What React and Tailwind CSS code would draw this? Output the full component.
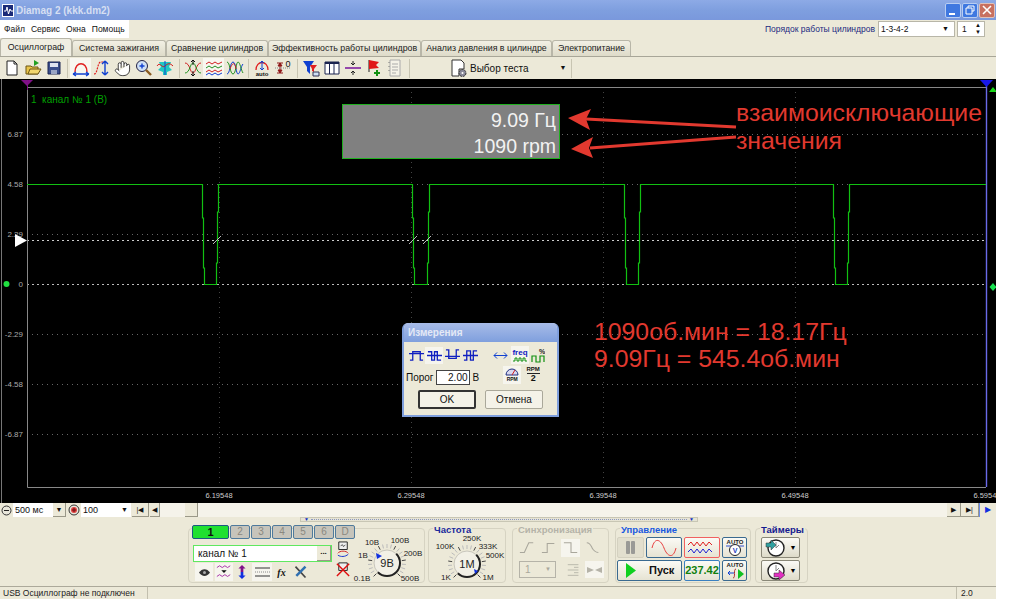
import { Hand } from 'lucide-react';

const pulses = [
    [202, 218],
    [412, 429],
    [624, 640],
    [833, 849],
];

// the green trace, with the small steps on each edge
const tracePath = () => {
    let d = 'M27 184.5';
    pulses.forEach(([a, b]) => {
        const l = a + 0.5;
        const r = b + 0.5;
        d += ` L${l} 184.5 L${l} 218 L${l + 1} 218 L${l + 1} 268 L${l + 2} 268 L${l + 2} 284.5 L${r - 2} 284.5 L${r - 2} 263 L${r - 1} 263 L${r - 1} 212 L${r} 212 L${r} 184.5`;
    });
    return d + ' L986 184.5';
};

const yLabels = [
    ['6.87', 134],
    ['4.58', 184],
    ['2.29', 234],
    ['0', 284],
    ['-2.29', 334],
    ['-4.58', 384],
    ['-6.87', 434],
];

const xLabels = [
    ['6.19548', 219],
    ['6.29548', 411],
    ['6.39548', 603],
    ['6.49548', 795],
    ['6.59548', 987],
];

const Ico = ({ children, size = 18, box = 18 }) => (
    <svg width={size} height={size} viewBox={`0 0 ${box} ${box}`} fill="none">
        {children}
    </svg>
);

const toolbar = [
    [
        <Ico key="n"><path d="M4 2h7l3 3v11H4z" fill="#fff" stroke="#222" /><path d="M11 2v3h3" stroke="#222" /></Ico>,
        <Ico key="o"><path d="M2 7h5l1 1h6v7H2z" fill="#e8c44a" stroke="#6b5512" /><path d="M4 15l2-5h11l-3 5z" fill="#f2d76c" stroke="#6b5512" /><path d="M10 1l5 3-5 3z" fill="#22a022" /></Ico>,
        <Ico key="s"><path d="M3 3h12v12H3z" fill="#3b4f8c" stroke="#1b2450" /><path d="M5 4h8v4H5z" fill="#dfe4f0" /><path d="M6 11h6v4H6z" fill="#9aa5c4" /></Ico>,
    ],
    [
        <Ico key="a1"><path d="M3 13C3 2 15 2 15 13" stroke="#e02020" strokeWidth="1.4" /><path d="M1 15h16M1 15l3-2M1 15l3 2M17 15l-3-2M17 15l-3 2" stroke="#1040d0" strokeWidth="1.3" /></Ico>,
        <Ico key="a2"><path d="M1 15C5 15 4 3 8 3h5" stroke="#e02020" strokeWidth="1.2" strokeDasharray="2 1" /><path d="M12 2v14M12 2l-3 3M12 2l3 3M12 16l-3-3M12 16l3-3" stroke="#1040d0" strokeWidth="1.4" /></Ico>,
        <Hand key="a3" size={17} strokeWidth={1.2} color="#222" fill="#fff" />,
        <Ico key="a4"><circle cx="7" cy="7" r="5.5" fill="#cfe0f5" stroke="#224" /><path d="M4.5 7h5M7 4.5v5" stroke="#1040d0" strokeWidth="1.4" /><path d="M11 11l5 5" stroke="#8a5a20" strokeWidth="2.4" /></Ico>,
        <Ico key="a5"><path d="M3 3h12l-2 5 3 3-5 2v3H7v-3l-5-2 3-3z" fill="#20c8c0" /><path d="M1 7c3-5 5 3 8 0s5-3 8 0" stroke="#d02020" /><path d="M9 2v14" stroke="#1040d0" /></Ico>,
    ],
    [
        <Ico key="b1"><path d="M1 4c5 0 5 10 8 10s3-10 8-10" stroke="#d02020" /><path d="M1 14c5 0 5-10 8-10s3 10 8 10" stroke="#209020" /><path d="M9 1v5M9 12v5M9 1L7 3M9 1l2 2M9 17l-2-2M9 17l2-2" stroke="#111" /></Ico>,
        <Ico key="b2"><path d="M1 5l3-2 3 2 3-2 3 2 4-2" stroke="#d02020" /><path d="M1 9l3-2 3 2 3-2 3 2 4-2" stroke="#209020" /><path d="M1 13l3-2 3 2 3-2 3 2 4-2" stroke="#d02020" /><path d="M1 16l3-2 3 2 3-2 3 2 4-2" stroke="#1040d0" /></Ico>,
        <Ico key="b3"><path d="M1 15C4 15 4 3 7 3s3 12 5 12 3-8 5-10" stroke="#1040d0" /><path d="M1 3c3 0 3 12 6 12s3-12 5-12 3 8 5 11" stroke="#209020" /><path d="M4 10c3-8 5-6 6 0" stroke="#d02020" /></Ico>,
    ],
    [
        <Ico key="c1"><path d="M3 11C3 1 15 1 15 11" stroke="#e02020" strokeWidth="1.3" /><path d="M9 2v9M9 2L7 4M9 2l2 2M9 11L7 9M9 11l2-2" stroke="#1040d0" /><text x="9" y="17" textAnchor="middle" fontSize="6" fontWeight="700" fill="#111">auto</text></Ico>,
        <Ico key="c2"><path d="M6 4v10M3 4h6M3 14h6M6 4L4 7h4zM6 14l-2-3h4z" stroke="#901818" fill="#901818" /><path d="M1 9h16" stroke="#888" strokeDasharray="1 1" /><text x="14" y="8" textAnchor="middle" fontSize="9" fill="#111">0</text></Ico>,
    ],
    [
        <Ico key="d1"><path d="M1 2h11L8 8v7L5 12V8z" fill="#1040d0" /><path d="M8 6h7l-3 4v3l-2-1v-2z" fill="#e02020" /><path d="M11 13h6v4h-6z" fill="#cfe0f5" stroke="#335" /></Ico>,
        <Ico key="d2"><path d="M2 3h14v12H2z" fill="#fff" stroke="#1b2450" /><path d="M2 3h14v2H2z" fill="#1b2450" /><path d="M6.5 3v12M11 3v12" stroke="#1b2450" /></Ico>,
        <Ico key="d3"><path d="M1 9h16" stroke="#8020a0" strokeWidth="1.6" /><path d="M9 2v4M7 4l2 2 2-2M9 16v-4M7 14l2-2 2 2" stroke="#222" /></Ico>,
        <Ico key="d4"><path d="M4 1v12" stroke="#222" /><path d="M4 1l10 2-3 3 3 3-10 1z" fill="#e01818" /><path d="M12 11v6M9 14h6" stroke="#109010" strokeWidth="2" /></Ico>,
        <Ico key="d5"><path d="M4 1h10v16H4z" fill="#f4f2e8" stroke="#aaa" /><path d="M6 5h6M6 8h6M6 11h6M6 14h4" stroke="#aaa" /><path d="M3 3v1M3 7v1M3 11v1" stroke="#777" /></Ico>,
    ],
];

const ToolbarSep = ({ className }) => <div className={`w-px h-[19px] bg-[#c8c5b2] ${className}`} />;

const tabs = [
    ['Осциллограф', 'w-[72px]', true],
    ['Система зажигания', 'w-[94px]'],
    ['Сравнение цилиндров', 'w-[102px]'],
    ['Эффективность работы цилиндров', 'w-[153px]'],
    ['Анализ давления в цилиндре', 'w-[131px]'],
    ['Электропитание', 'w-[79px]'],
];

const MiniBtn = ({ children, className = '' }) => (
    <div className={`flex items-center justify-center h-[14px] bg-[#ece9d8] border-r border-b border-[#9a9888] text-[#111] ${className}`}>
        {children}
    </div>
);

const voltLabels = [
    ['10В', 24, 15],
    ['100В', 52, 13],
    ['200В', 65, 26],
    ['500В', 62, 51],
    ['0.1В', 14, 51],
    ['1В', 15, 28],
];

const freqLabels = [
    ['250K', 43, 15],
    ['100K', 16, 23],
    ['333K', 59, 23],
    ['500K', 66, 32],
    ['1K', 17, 54],
    ['1М', 59, 54],
];

const Dial = ({ labels, value, cx, cy, marker, w, h }) => {
    const ticks = [];
    for (let i = 0; i <= 20; i++) {
        const a = ((135 + i * 13.5) * Math.PI) / 180;
        ticks.push(
            <line
                key={i}
                x1={cx + Math.cos(a) * 15}
                y1={cy + Math.sin(a) * 15}
                x2={cx + Math.cos(a) * 19}
                y2={cy + Math.sin(a) * 19}
                stroke={i % 4 === 0 ? '#444' : '#bbb'}
            />
        );
    }
    return (
        <svg width={w} height={h} viewBox={`0 0 ${w} ${h}`} fill="none" className="shrink-0">
            {ticks}
            <circle cx={cx} cy={cy} r="13" fill="#f2f0e6" stroke="#c8c6bc" />
            <path d={`M${cx + 9.2} ${cy - 9.2}A13 13 0 0 1 ${cx - 9.2} ${cy + 9.2}`} stroke="#222" strokeWidth="2" />
            <path d={marker} fill="#1030e0" />
            <text x={cx} y={cy + 4} textAnchor="middle" fontSize="11" fill="#222">{value}</text>
            {labels.map(([t, x, y]) => (
                <text key={t} x={x} y={y} textAnchor="middle" fontSize="8" fill="#222">{t}</text>
            ))}
        </svg>
    );
};

const Group = ({ title, titleColor, className, children }) => (
    <div className={`relative h-[55px] border border-[#d6d3c2] rounded-[4px] ${className}`}>
        {title && (
            <div className={`absolute -top-[5px] left-[4px] bg-[#ece9d8] px-px text-[9.5px] leading-[11px] font-bold whitespace-nowrap ${titleColor}`}>
                {title}
            </div>
        )}
        {children}
    </div>
);

const xpBtn = 'flex items-center justify-center rounded-[2px] border border-[#3a6a90] bg-gradient-to-b from-[#fbfaf5] to-[#e6e3d3]';

const Measure = () => (
    <div className="absolute left-[402px] top-[244px] w-[157px] h-[94px] flex flex-col rounded-t-[6px] overflow-hidden border-2 border-t-0 border-[#7f9fdd] bg-[#ece9d8]">
        <div className="h-[19px] shrink-0 bg-gradient-to-b from-[#a8bce8] to-[#7f9fdd] pl-[4px] text-[10px] leading-[19px] font-bold text-[#e4e9f6]">
            Измерения
        </div>
        <div className="flex items-center h-[20px] mt-[3px]">
            {['M1 13h3V4h8v9h3M0 6h16', 'M1 4h4v9h3V4h3v9h4M0 8h16', 'M1 2h3v9h8V2h3M0 9h16', 'M1 13h3V3h4v10h3V3h4M0 8h16'].map((d, i) => (
                <div key={d} className={`w-[18px] h-[17px] flex items-center justify-center ${i === 0 ? 'ml-[3px]' : ''} ${i === 1 ? 'bg-[#f6f5ee]' : ''}`}>
                    <svg width="15" height="15" viewBox="0 0 16 16" fill="none"><path d={d} stroke="#1020c0" strokeWidth="1.4" /></svg>
                </div>
            ))}
            <svg width="15" height="9" viewBox="0 0 15 9" fill="none" className="ml-[14px]"><path d="M1 4.5h13M1 4.5l3-3M1 4.5l3 3M14 4.5l-3-3M14 4.5l-3 3" stroke="#1040d0" /></svg>
            <div className="ml-[3px] w-[18px] h-[18px] bg-[#f6f5ee] flex flex-col items-center justify-center text-[8px] leading-[8px] font-bold text-[#1020c0]">
                freq
                <svg width="15" height="5" viewBox="0 0 15 5" fill="none"><path d="M0 4h2V1h2v3h2V1h2v3h2V1h2v3h2" stroke="#109010" /></svg>
            </div>
            <svg width="14" height="17" viewBox="0 0 14 17" fill="none" className="ml-[2px]">
                <path d="M1 15V9h4v6h4V9h4v6" stroke="#109010" strokeWidth="1.2" />
                <text x="8" y="7" fontSize="7" fontWeight="700" fill="#222">%</text>
            </svg>
        </div>
        <div className="flex items-center h-[19px] text-[10px] text-[#111]">
            <span className="ml-[2px] mt-[5px]">Порог</span>
            <div className="ml-[2px] mt-[5px] w-[34px] h-[15px] border border-[#444] bg-white text-right pr-px leading-[13px]">2.00</div>
            <span className="ml-[3px] mt-[5px]">В</span>
            <div className="ml-[24px] w-[18px] h-[18px] bg-[#f6f5ee] flex flex-col items-center justify-center">
                <svg width="14" height="9" viewBox="0 0 14 9" fill="none"><path d="M1 8a6 6 0 0 1 12 0z" fill="#d8d8f0" stroke="#203080" /><path d="M7 8l3-5" stroke="#d02020" /></svg>
                <span className="text-[5px] leading-[6px] font-bold">RPM</span>
            </div>
            <div className="ml-[3px] w-[18px] flex flex-col items-center text-[6px] leading-[7px] font-bold">
                <span className="border-b border-[#222]">RPM</span>
                <span className="text-[9px] leading-[9px]">2</span>
            </div>
        </div>
        <div className="flex mt-[6px] text-[10px] text-[#111]">
            <div className="ml-[14px] w-[58px] h-[19px] flex items-center justify-center border-2 border-[#333] rounded-[2px] bg-[#f4f2e8]">OK</div>
            <div className="ml-[9px] w-[58px] h-[19px] flex items-center justify-center border border-[#aaa89a] rounded-[2px] bg-[#f4f2e8]">Отмена</div>
        </div>
    </div>
);

const Scope = () => (
    <div className="relative h-[424px] bg-black overflow-hidden">
        <svg width="996" height="424" viewBox="0 79 996 424" className="absolute left-0 top-0" fill="none">
            <line x1="1.5" y1="79" x2="1.5" y2="503" stroke="#777" />
            {xLabels.slice(0, 4).map(([t, x]) => (
                <line key={t} x1={x + 0.5} y1="87" x2={x + 0.5} y2="487" stroke="#444" strokeDasharray="1 4" />
            ))}
            {yLabels.map(([t, y]) => (
                <g key={t}>
                    <line x1="27" y1={y + 0.5} x2="986" y2={y + 0.5} stroke={y === 284 ? '#bbb' : '#666'} strokeDasharray={y === 284 ? '2 3' : '1 4'} />
                    <text x="23" y={y + 3} textAnchor="end" fontSize="8" fill="#aaa">{t}</text>
                </g>
            ))}
            <line x1="27" y1="240.5" x2="986" y2="240.5" stroke="#ccc" strokeDasharray="2 3" />
            <path d="M27.5 87.500H986M27.500 87.500V487.500H986" stroke="#888" />
            <line x1="986.5" y1="86" x2="986.5" y2="487" stroke="#6a6ae8" strokeWidth="1.4" />
            <path d={tracePath()} stroke="#12c012" strokeWidth="1.2" />
            {[217, 413, 427].map((x) => (
                <line key={x} x1={x - 4} y1="244" x2={x + 4} y2="236" stroke="#bbb" />
            ))}
            <path d="M15 234L27 240.5L15 247z" fill="#fff" />
            <circle cx="6.5" cy="284" r="3" fill="#20e040" />
            <path d="M21 80H33L27 86z" fill="#801088" />
            <line x1="27.5" y1="84" x2="27.5" y2="90" stroke="#801088" />
            <path d="M980 80H993L986.500 87z" fill="#1818e8" />
            <path d="M989 92L993 87L997 92z" fill="#18d818" />
            <path d="M993 283l3.500 4-3.500 4-3.500-4z" fill="#18e050" />
            {xLabels.map(([t, x]) => (
                <text key={t} x={x} y="498" textAnchor="middle" fontSize="7.5" fill="#ccc">{t}</text>
            ))}
            <path d="M736 127L586 119" stroke="#e2392f" strokeWidth="3" />
            <path d="M568 118L591 109L586 119L590 130z" fill="#e2392f" />
            <path d="M736 137L590 148" stroke="#e2392f" strokeWidth="3" />
            <path d="M571 149L593 137L589 148L593 158z" fill="#e2392f" />
        </svg>
        <div className="absolute left-[31px] top-[15px] text-[10px] leading-[12px] text-[#00a000] whitespace-pre">1  канал № 1 (В)</div>
        <div className="absolute left-[342px] top-[25px] w-[218px] h-[55px] bg-[#808080] border border-[#20b020] flex flex-col items-end pr-[3px] pt-[2px] text-[19.5px] leading-[26px] text-[#f2f2f2]">
            <span>9.09 Гц</span>
            <span>1090 rpm</span>
        </div>
        <div className="absolute left-[736px] top-[20px] text-[24.8px] leading-[28px] text-[#e2392f] whitespace-nowrap">
            взаимоисключающие
            <br />
            значения
        </div>
        <div className="absolute left-[594px] top-[239px] text-[24.8px] leading-[27px] text-[#e2392f] whitespace-nowrap">
            1090об.мин = 18.17Гц
            <br />
            9.09Гц = 545.4об.мин
        </div>
        <Measure />
    </div>
);

const ScrollRow = () => (
    <div className="flex h-[14px] text-[9px] leading-[14px] text-[#111]">
        <div className="w-[13px] flex items-center justify-center">
            <svg width="11" height="11" viewBox="0 0 11 11" fill="none"><circle cx="5.5" cy="5.5" r="4.5" fill="#e8e6da" stroke="#333" /><path d="M3 5.5h5" stroke="#222" /></svg>
        </div>
        <div className="w-[40px] bg-white pl-[2px]">500 мс</div>
        <MiniBtn className="w-[13px] text-[7px]">▼</MiniBtn>
        <div className="w-[14px] ml-px flex items-center justify-center">
            <svg width="12" height="12" viewBox="0 0 12 12" fill="none"><circle cx="6" cy="6" r="5" fill="#e8e6da" stroke="#333" /><circle cx="6" cy="6" r="3" fill="#e04040" /><path d="M4 6h4M6 4v4" stroke="#611" /></svg>
        </div>
        <div className="w-[50px] bg-white pl-[2px] flex justify-between pr-[3px]">
            <span>100</span>
            <span className="text-[7px]">▼</span>
        </div>
        <MiniBtn className="w-[17px] ml-px text-[7px]">|◀</MiniBtn>
        <MiniBtn className="w-[10px] ml-px text-[7px]">◀</MiniBtn>
        <div className="flex-1 bg-[#f5f3ea]">
            <div className="ml-[25px] w-[13px] h-[14px] bg-[#ece9d8] border-r border-b border-[#9a9888]" />
        </div>
        <MiniBtn className="w-[14px] text-[7px]">▶</MiniBtn>
        <MiniBtn className="w-[18px] text-[7px]">▶|</MiniBtn>
        <div className="w-[17px] border-l border-[#6a8ae8] text-center text-[8px] text-[#1030e0]">▶</div>
    </div>
);

const ChannelGroup = () => (
    <Group className="w-[237px]">
        <div className="absolute left-[3px] -top-[4px] flex gap-px">
            <div className="w-[37px] h-[14px] rounded-[2px] border border-[#1b5a80] bg-[#20e030] text-center text-[11px] leading-[12px] font-bold text-[#111]">1</div>
            {['2', '3', '4', '5', '6', 'D'].map((c) => (
                <div key={c} className="w-[20px] h-[14px] rounded-[2px] border border-[#4f7a9c] bg-[#c6c4bb] text-center text-[10px] leading-[12px] text-[#8a8880]">{c}</div>
            ))}
        </div>
        <div className="flex pl-[4px] pt-[16px]">
            <div className="w-[139px] shrink-0">
                <div className="h-[17px] flex border border-[#60e860] bg-white text-[10px] leading-[15px] text-[#111]">
                    <span className="flex-1 pl-[4px]">канал № 1</span>
                    <div className="w-[14px] bg-[#ece9d8] border-r border-b border-[#9a9888] text-center text-[8px] leading-[11px] font-bold">...</div>
                </div>
                <div className="flex items-center h-[18px] mt-px">
                    <div className="w-[18px] h-[18px] ml-[2px] bg-[#f6f5ee] flex items-center justify-center">
                        <svg width="13" height="9" viewBox="0 0 13 9"><path d="M1 4.5C4 0 9 0 12 4.5 9 9 4 9 1 4.5z" fill="#333" /><circle cx="6.5" cy="4.5" r="1.5" fill="#aaa" /></svg>
                    </div>
                    <div className="w-[18px] h-[18px] ml-[2px] bg-[#f6f5ee] flex items-center justify-center">
                        <Ico size={16}><path d="M1 4l3-2 3 2 3-2 3 2 3-2" stroke="#a020a0" /><path d="M1 14l3-2 3 2 3-2 3 2 3-2" stroke="#a020a0" /><path d="M6 7h6l-3 3z" fill="#111" /></Ico>
                    </div>
                    <div className="w-[16px] ml-[1px] flex justify-center">
                        <Ico size={16}><path d="M9 1l4 4h-2.500v4h-3V5H5z" fill="#801088" /><path d="M7.500 9h3v4H13l-4 4-4-4h2.500z" fill="#1030e0" /></Ico>
                    </div>
                    <div className="w-[20px] h-[18px] ml-[2px] bg-[#f6f5ee] flex items-center justify-center">
                        <svg width="15" height="10" viewBox="0 0 15 10" fill="none"><path d="M0 1h15M0 9h15" stroke="#333" /><path d="M0 5h15" stroke="#888" strokeDasharray="1 1" /></svg>
                    </div>
                    <span className="w-[15px] ml-[2px] text-center font-['Liberation_Serif',serif] italic font-bold text-[10px] text-[#111]">fx</span>
                    <div className="w-[16px] ml-[3px] flex justify-center">
                        <Ico size={15}><path d="M3 2l12 13" stroke="#444" strokeWidth="2" /><path d="M15 2L4 13" stroke="#3070b0" strokeWidth="3" /></Ico>
                    </div>
                </div>
            </div>
            <div className="w-[17px] ml-[3px] -mt-[4px] flex flex-col items-center gap-[3px] shrink-0">
                <Ico size={17}><path d="M4 1h9v8H4z" fill="#eee" stroke="#222" /><path d="M6 5l2-1 1 2 2-2" stroke="#555" /><path d="M3 13c2-3 9-3 11 0" stroke="#d02020" /><path d="M3 15c3 2 8 2 11-1" stroke="#1030d0" /></Ico>
                <Ico size={17}><path d="M4 2h9v8H4z" fill="#eee" stroke="#222" /><path d="M2 3l13 13M15 3L2 16" stroke="#e01010" strokeWidth="1.5" /></Ico>
            </div>
            <div className="-mt-[15px] -ml-[4px]">
                <Dial labels={voltLabels} value="9В" cx={39} cy={33} w={76} h={54} marker="M28 23l6 3-5 3z" />
            </div>
        </div>
    </Group>
);

const SyncGroup = () => (
    <Group title="Синхронизация" titleColor="text-[#b5b3a8]" className="w-[97px] ml-[6px]">
        <div className="flex items-center h-[20px] mt-[9px] pl-[4px] gap-[3px]">
            {['M1 14h5l5-11h5', 'M1 14h6V4h8', 'M1 3h8v11h7', 'M2 3c4 0 5 4 6 6s4 5 7 5'].map((d, i) => (
                <div key={d} className={`w-[19px] h-[18px] flex items-center justify-center ${i === 2 ? 'bg-[#f6f5ee]' : ''}`}>
                    <Ico size={16}><path d={d} stroke="#a9a79c" strokeWidth="1.2" /></Ico>
                </div>
            ))}
        </div>
        <div className="flex items-center mt-[3px] pl-[6px]">
            <div className="w-[37px] h-[17px] border border-[#b5b3a8] text-[10px] leading-[15px] text-[#a9a79c] pl-[5px] flex justify-between pr-[4px]">
                <span>1</span>
                <span className="text-[6px]">▼</span>
            </div>
            <div className="w-[19px] ml-[8px] flex justify-center">
                <Ico size={16}><path d="M2 3h12M2 9h12M2 15h12M9 6h5M9 12h5" stroke="#b5b3a8" /></Ico>
            </div>
            <div className="w-[19px] h-[17px] ml-[2px] bg-[#f6f5ee] flex items-center justify-center">
                <svg width="15" height="8" viewBox="0 0 15 8"><path d="M0 1l7 3-7 3zM15 1L8 4l7 3z" fill="#b5b3a8" /></svg>
            </div>
        </div>
    </Group>
);

const ControlGroup = () => (
    <Group title="Управление" titleColor="text-[#1a5ae0]" className="w-[136px] ml-[6px]">
        <div className="flex gap-[2px] pl-px pt-[8px]">
            <div className="w-[27px] h-[21px] rounded-[2px] bg-[#e2dfce] border border-[#d4d1c0] flex items-center justify-center gap-px">
                <div className="w-[4px] h-[13px] bg-[#9a9a96] rounded-[1px]" />
                <div className="w-[4px] h-[13px] bg-[#9a9a96] rounded-[1px]" />
            </div>
            <div className={`w-[36px] h-[21px] ${xpBtn}`}>
                <svg width="26" height="17" viewBox="0 0 26 17" fill="none"><path d="M1 9C4-3 10 1 13 9s9 12 12 0" stroke="#e84040" /></svg>
            </div>
            <div className={`w-[36px] h-[21px] ${xpBtn} border-[#f06060]`}>
                <svg width="30" height="17" viewBox="0 0 30 17" fill="none">
                    <path d="M1 6l3-3 3 4 3-4 3 4 3-4 3 4 3-4 3 3" stroke="#e02020" />
                    <path d="M1 13l3-3 3 4 3-4 3 4 3-4 3 4 3-4 3 3" stroke="#2020d0" />
                </svg>
            </div>
            <div className={`w-[25px] h-[21px] ${xpBtn}`}>
                <svg width="20" height="19" viewBox="0 0 20 19" fill="none">
                    <text x="10" y="6" textAnchor="middle" fontSize="6" fontWeight="700" fill="#222">AUTO</text>
                    <path d="M1 8h18" stroke="#3050d0" />
                    <circle cx="10" cy="12" r="5.5" fill="#fff" stroke="#222" />
                    <text x="10" y="15" textAnchor="middle" fontSize="7" fontWeight="700" fill="#2040c0">V</text>
                </svg>
            </div>
        </div>
        <div className="flex gap-[2px] pl-px pt-[2px]">
            <div className={`w-[65px] h-[21px] ${xpBtn} justify-start pl-[8px] text-[11px] font-bold text-[#111]`}>
                <svg width="10" height="15" viewBox="0 0 10 15" className="shrink-0"><path d="M0 0l10 7.5L0 15z" fill="#10d020" /></svg>
                <span className="ml-[13px]">Пуск</span>
            </div>
            <div className={`w-[36px] h-[21px] ${xpBtn} border-[#3a80c0] text-[11px] font-bold text-[#108010]`}>237.42</div>
            <div className={`w-[25px] h-[21px] ${xpBtn}`}>
                <svg width="20" height="19" viewBox="0 0 20 19" fill="none">
                    <text x="10" y="6" textAnchor="middle" fontSize="6" fontWeight="700" fill="#222">AUTO</text>
                    <path d="M3 12h6M3 12l2-2M3 12l2 2" stroke="#1040d0" />
                    <path d="M8 17c3 0 0-9 3-9" stroke="#b03030" />
                    <path d="M13 8l6 5-6 5z" fill="#10c020" />
                </svg>
            </div>
        </div>
    </Group>
);

const Clock = ({ arrow, color }) => (
    <svg width="21" height="20" viewBox="0 0 21 20" fill="none">
        <circle cx="11" cy="10" r="8" fill="#fff" stroke="#222" strokeWidth="1.4" />
        <path d="M11 4v6l3-3" stroke="#888" />
        <path d={arrow} fill={color} stroke="#333" strokeWidth="0.5" />
    </svg>
);

const TimerGroup = () => (
    <Group title="Таймеры" titleColor="text-[#141a90]" className="w-[53px] ml-[4px]">
        <div className="flex flex-col gap-[2px] pl-[5px] pt-[8px]">
            <div className="w-[39px] h-[21px] flex items-center justify-center gap-[4px] rounded-[2px] border border-[#8a8878] bg-gradient-to-b from-[#fbfaf5] to-[#dedbc9]">
                <Clock arrow="M1 5h5V2l5 5-5 5V9H1z" color="#30a0a0" />
                <span className="text-[7px] leading-[7px]">▼</span>
            </div>
            <div className="w-[39px] h-[21px] flex items-center justify-center gap-[4px] rounded-[2px] border border-[#8a8878] bg-gradient-to-b from-[#fbfaf5] to-[#dedbc9]">
                <Clock arrow="M9 12h5V9l6 5-6 5v-3H9z" color="#e030c0" />
                <span className="text-[7px] leading-[7px]">▼</span>
            </div>
        </div>
    </Group>
);

const App = () => {
    return (
        <div className="w-[1024px] h-[599px] bg-white overflow-hidden font-['Liberation_Sans',sans-serif]">
            <div className="w-[996px] h-[599px] flex flex-col bg-[#ece9d8]">
                {/* title bar */}
                <div className="h-[20px] shrink-0 flex items-center bg-gradient-to-b from-[#8daae6] via-[#7f9fdf] to-[#7a98dc]">
                    <div className="ml-[2px] w-[12px] h-[13px] bg-[#1a2a78] border border-white flex items-center justify-center">
                        <svg width="9" height="9" viewBox="0 0 9 9" fill="none"><path d="M0 5h2l1-4 1.500 7L6 3l1 2h2" stroke="#fff" /></svg>
                    </div>
                    <span className="ml-[2px] text-[10px] font-bold text-[#d6dff2]">Diamag 2 (kkk.dm2)</span>
                    <div className="ml-auto mr-[1px] flex gap-px">
                        <div className="w-[16px] h-[15px] rounded-[2px] bg-[#3f78e0] border border-[#b8cdf2] flex items-end pl-[3px] pb-[2px]"><div className="w-[6px] h-[2px] bg-white" /></div>
                        <div className="w-[16px] h-[15px] rounded-[2px] bg-[#3f78e0] border border-[#b8cdf2] flex items-center justify-center">
                            <svg width="10" height="10" viewBox="0 0 10 10" fill="none"><path d="M3 3V1h6v5H7M1 3h6v6H1z" stroke="#fff" /></svg>
                        </div>
                        <div className="w-[16px] h-[15px] rounded-[2px] bg-[#c87060] border border-[#e0c0b8] flex items-center justify-center">
                            <svg width="10" height="10" viewBox="0 0 10 10" fill="none"><path d="M1 1l8 8M9 1L1 9" stroke="#fff" strokeWidth="1.6" /></svg>
                        </div>
                    </div>
                </div>
                {/* menu */}
                <div className="h-[18px] shrink-0 flex items-center text-[8.5px] text-[#111]">
                    <div className="w-[129px] h-[18px] bg-white flex items-center gap-[6px] pl-[4px]">
                        <span>Файл</span>
                        <span>Сервис</span>
                        <span>Окна</span>
                        <span>Помощь</span>
                    </div>
                    <span className="ml-auto text-[#1a2a80]">Порядок работы цилиндров</span>
                    <div className="ml-[3px] w-[77px] h-[16px] bg-white border border-[#b8b6a8] pl-[2px] flex justify-between pr-[5px] leading-[14px]">
                        <span>1-3-4-2</span>
                        <span className="text-[7px]">▼</span>
                    </div>
                    <div className="ml-[2px] mr-[11px] w-[28px] h-[16px] bg-white border border-[#b8b6a8] pl-[4px] flex justify-between pr-[3px] leading-[14px]">
                        <span>1</span>
                        <span className="text-[6px] leading-[7px] text-center">▲<br />▼</span>
                    </div>
                </div>
                {/* tabs */}
                <div className="h-[19px] shrink-0 flex items-end border-b border-[#a8a698]">
                    {tabs.map(([t, w, active]) => (
                        <div
                            key={t}
                            className={`${w} flex items-center justify-center rounded-t-[3px] border border-b-0 border-[#b8b6a8] text-[8.8px] text-[#222] whitespace-nowrap ${active ? 'h-[18px] bg-[#f0eee2]' : 'h-[16px] bg-gradient-to-b from-[#f2f0e4] to-[#dedbc9]'}`}
                        >
                            {t}
                        </div>
                    ))}
                </div>
                {/* toolbar */}
                <div className="h-[22px] shrink-0 flex items-center pl-px">
                    {toolbar.map((group, i) => (
                        <div key={i} className="flex items-center">
                            {i > 0 && <ToolbarSep className={i === 2 ? 'ml-[4px] mr-[2px]' : i === 4 ? 'ml-[4px] mr-[2px]' : 'ml-[3px] mr-[2px]'} />}
                            {group.map((icon, j) => (
                                <div
                                    key={j}
                                    className={`w-[21px] h-[20px] flex items-center justify-center ${(i === 1 && j === 0) || (i === 2 && j === 1) ? 'bg-[#f8f7f0]' : ''}`}
                                >
                                    {icon}
                                </div>
                            ))}
                        </div>
                    ))}
                    <ToolbarSep className="ml-[4px]" />
                    <div className="ml-[40px] flex items-center text-[10px] text-[#111]">
                        <svg width="18" height="19" viewBox="0 0 18 19" fill="none">
                            <path d="M2 1h9l3 3v6H9v7H2z" fill="#fff" stroke="#333" />
                            <circle cx="12.500" cy="14" r="3.500" fill="#889" stroke="#333" strokeDasharray="2 1" />
                            <circle cx="12.500" cy="14" r="1" fill="#fff" />
                        </svg>
                        <span className="ml-[2px]">Выбор теста</span>
                        <span className="ml-[31px] text-[7px]">▼</span>
                    </div>
                    <ToolbarSep className="ml-[5px]" />
                </div>
                <Scope />
                <ScrollRow />
                {/* bottom panel */}
                <div className="h-[69px] shrink-0">
                    <div className="ml-[300px] w-[398px] h-[5px] border border-[#c8c6b4] flex items-center px-[3px] text-[5px] leading-[3px] text-[#1030c0] bg-[#e6e3d3]">
                        <span>▼</span>
                        <div className="flex-1 mx-[2px] border-t border-dotted border-[#8a98c0]" />
                        <span>▼</span>
                    </div>
                    <div className="flex pl-[188px] mt-[6px]">
                        <ChannelGroup />
                        <Group title="Частота" titleColor="text-[#1a2a9c]" className="w-[78px] ml-[3px]">
                            <div className="-mt-[3px]">
                                <Dial labels={freqLabels} value="1М" cx={38} cy={38} w={76} h={58} marker="M45 43l4 2-3 3z" />
                            </div>
                        </Group>
                        <SyncGroup />
                        <ControlGroup />
                        <TimerGroup />
                    </div>
                </div>
                {/* status bar */}
                <div className="h-[13px] shrink-0 flex border-t border-[#aca99a] text-[8.5px] leading-[12px] text-[#222]">
                    <div className="w-[148px] pl-[3px] border-r border-[#c2bfae] whitespace-nowrap">USB Осциллограф не подключен</div>
                    <div className="ml-[2px] w-[807px] border-r border-[#c2bfae]" />
                    <div className="pl-[4px]">2.0</div>
                </div>
            </div>
        </div>
    );
};

export default App;
